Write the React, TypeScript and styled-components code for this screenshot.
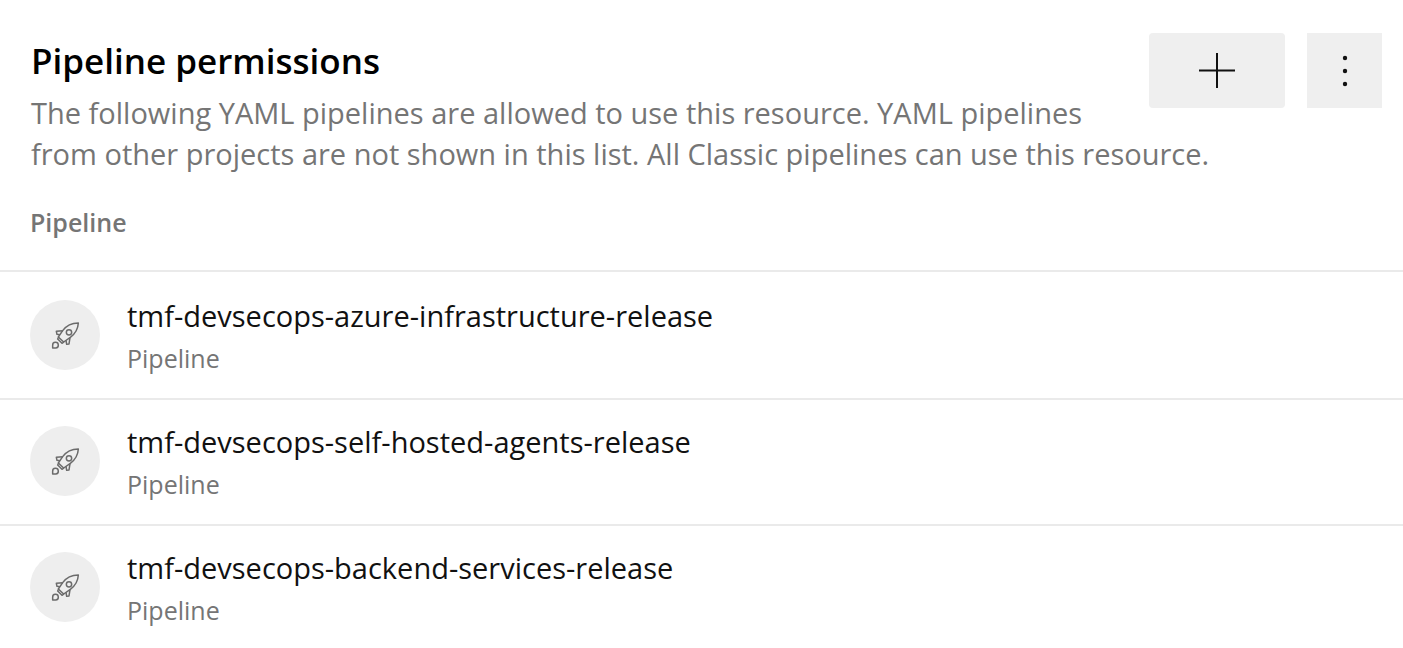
import React from 'react';
import styled, { createGlobalStyle } from 'styled-components';

const GlobalStyle = createGlobalStyle`
  * { box-sizing: border-box; }
  body {
    margin: 0;
    background: #fff;
    color: #111;
    font-family: 'Segoe UI', 'Open Sans', 'Noto Sans', sans-serif;
  }
`;

const Panel = styled.main`
  padding-top: 33px;
`;

const Header = styled.header`
  display: flow-root;
  padding: 0 21px 0 31px;
`;

const Actions = styled.div`
  float: right;
  display: flex;
  gap: 22px;
`;

const ActionButton = styled.button<{ $wide?: boolean }>`
  display: flex;
  align-items: center;
  justify-content: center;
  width: ${(p) => (p.$wide ? 136 : 75)}px;
  height: 75px;
  padding: 0;
  border: 0;
  border-radius: ${(p) => (p.$wide ? 4 : 0)}px;
  background: #efefef;
  color: #111;
`;

const Title = styled.h1`
  margin: 0;
  padding-bottom: 4px;
  color: #000;
  font-size: 35px;
  font-weight: 600;
  line-height: 55px;
`;

const Description = styled.p`
  margin: 0;
  color: #757575;
  font-size: 29px;
  font-weight: 400;
  line-height: 41px;
`;

const Table = styled.table`
  width: 100%;
  margin-top: 24px;
  border-collapse: separate;
  border-spacing: 0;
`;

const ColumnHeader = styled.th`
  padding: 7px 30px 31px;
  border-bottom: 2px solid #eaeaea;
  color: #757575;
  font-size: 25px;
  font-weight: 600;
  line-height: 34px;
  text-align: left;
`;

const Cell = styled.td`
  padding: 21px 30px 19px;
  border-bottom: 2px solid #eaeaea;

  tr:first-child > & { padding-top: 23px; }
  tr:last-child > & { border-bottom: 0; }
`;

const Item = styled.div`
  display: flex;
  align-items: flex-start;
  gap: 27px;
`;

const Avatar = styled.span`
  display: flex;
  flex: none;
  align-items: center;
  justify-content: center;
  width: 70px;
  height: 70px;
  margin-top: 5px;
  border-radius: 50%;
  background: #eee;
  color: #6b6b6b;
`;

const Name = styled.div`
  font-size: 29px;
  line-height: 42px;
`;

const Kind = styled.div`
  color: #757575;
  font-size: 25px;
  line-height: 42px;
`;

const PlusIcon = () => (
  <svg width="36" height="36" viewBox="0 0 36 36" stroke="currentColor" strokeWidth="2" aria-hidden="true">
    <path d="M18 0V35M0 17.5H36" />
  </svg>
);

const MoreIcon = () => (
  <svg width="6" height="32" viewBox="0 0 6 32" fill="currentColor" aria-hidden="true">
    <circle cx="3" cy="3" r="2.2" />
    <circle cx="3" cy="16" r="2.2" />
    <circle cx="3" cy="29" r="2.2" />
  </svg>
);

const RocketIcon = () => (
  <svg
    width="29"
    height="29"
    viewBox="0 0 87 87"
    fill="none"
    stroke="currentColor"
    strokeWidth="4.5"
    strokeLinejoin="round"
    aria-hidden="true"
  >
    <path d="M82 6C62 6 46 14 35 29L22 48L38 63L58 49C73 38 81 24 82 6Z" />
    <circle cx="54" cy="34" r="8" />
    <path d="M36 29L16 31L18 40L27 41" />
    <path d="M57 50L54 69L47 70L45 58" />
    <path d="M23 48L20 54L33 67L39 63" />
    <path d="M5 81V73A8.500 8.500 0 1 1 14 81Z" />
  </svg>
);

const pipelines = [
  'tmf-devsecops-azure-infrastructure-release',
  'tmf-devsecops-self-hosted-agents-release',
  'tmf-devsecops-backend-services-release',
];

export default function App() {
  return (
    <>
      <GlobalStyle />
      <Panel>
        <Header>
          <Actions>
            <ActionButton type="button" $wide aria-label="Add pipeline">
              <PlusIcon />
            </ActionButton>
            <ActionButton type="button" aria-label="More actions">
              <MoreIcon />
            </ActionButton>
          </Actions>
          <Title>Pipeline permissions</Title>
          <Description>
            The following YAML pipelines are allowed to use this resource. YAML pipelines
            <br />
            from other projects are not shown in this list. All Classic pipelines can use this resource.
          </Description>
        </Header>
        <Table>
          <thead>
            <tr>
              <ColumnHeader scope="col">Pipeline</ColumnHeader>
            </tr>
          </thead>
          <tbody>
            {pipelines.map((name) => (
              <tr key={name}>
                <Cell>
                  <Item>
                    <Avatar>
                      <RocketIcon />
                    </Avatar>
                    <div>
                      <Name>{name}</Name>
                      <Kind>Pipeline</Kind>
                    </div>
                  </Item>
                </Cell>
              </tr>
            ))}
          </tbody>
        </Table>
      </Panel>
    </>
  );
}
